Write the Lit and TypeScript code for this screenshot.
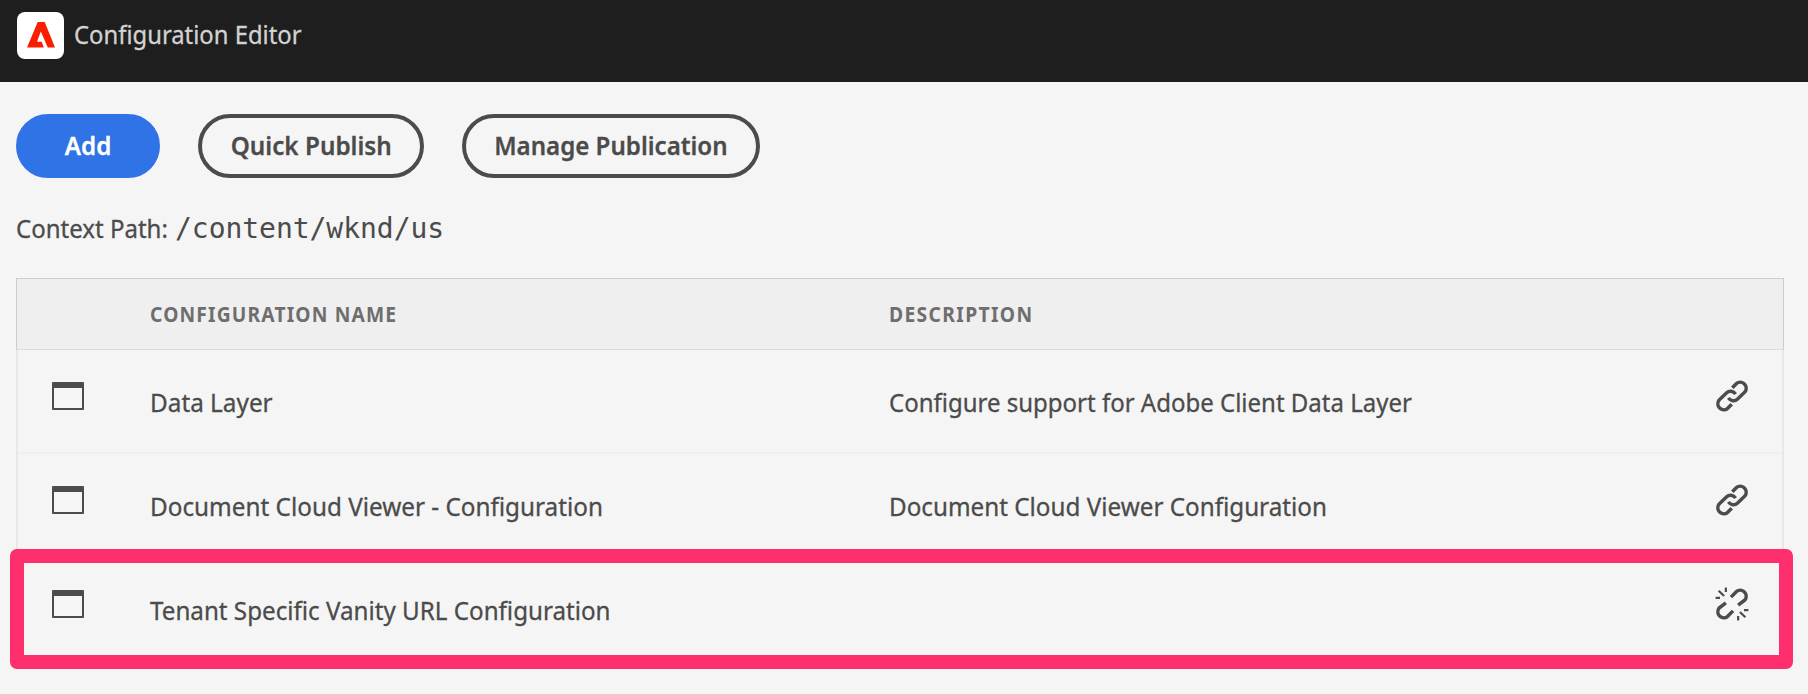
import { LitElement, html, css, svg } from "lit";
import { customElement, property } from "lit/decorators.js";

interface Config {
  name: string;
  nameScale: number;
  description: string;
  descriptionScale: number;
  linked: boolean;
  highlighted?: boolean;
}

const CONFIGS: Config[] = [
  { name: "Data Layer", nameScale: 0.935, description: "Configure support for Adobe Client Data Layer", descriptionScale: 0.923, linked: true },
  { name: "Document Cloud Viewer - Configuration", nameScale: 0.934, description: "Document Cloud Viewer Configuration", descriptionScale: 0.932, linked: true },
  { name: "Tenant Specific Vanity URL Configuration", nameScale: 0.93, description: "", descriptionScale: 1, linked: false, highlighted: true },
];

@customElement("link-icon")
class LinkIcon extends LitElement {
  @property({ type: Boolean }) linked = false;

  static styles = css`
    :host { display: block; width: 32px; height: 32px; }
    svg { display: block; overflow: visible; fill: none; stroke: #4b4b4b; }
    .chain { stroke-width: 3.4; }
    .tick { stroke-width: 2.1; }
  `;

  render() {
    return html`<svg width="32" height="32" viewBox="0.4 0.4 31.2 31.2">
      ${this.linked
        ? svg`<path class="chain" d="M16.3 8 20.4 3.8A5.85 5.85 0 0 1 28.6 12L21.2 19.2C18.6 21.6 14.6 21 12.5 17.8"/>
              <path class="chain" d="M15.7 24 11.6 28.2A5.85 5.85 0 0 1 3.4 20L10.8 12.8C13.4 10.4 17.4 11 19.5 14.2"/>`
        : svg`<path class="chain" d="M15 9.3 20.4 3.8A5.85 5.85 0 0 1 28.6 12L22 17"/>
              <path class="chain" d="M17 22.7 11.6 28.2A5.85 5.85 0 0 1 3.4 20L10 15"/>
              <path class="tick" d="M10 0V4.3M3 3 8.3 8.2M0 10H4.3M22 32V27.7M29 29 23.7 23.8M32 22H27.7"/>`}
    </svg>`;
  }
}

@customElement("app-root")
class AppRoot extends LitElement {
  static styles = css`
    :host {
      display: block;
      height: 694px;
      overflow: hidden;
      background: #f5f5f5;
      color: #4b4b4b;
      font: 400 26px/36px "Noto Sans", "Open Sans", sans-serif;
      box-sizing: border-box;
    }
    * { box-sizing: border-box; }
    header {
      display: flex;
      align-items: flex-start;
      height: 82px;
      padding: 12px 17px;
      gap: 10px;
      background: #1e1e1e;
      color: #d2d2d2;
    }
    .logo { display: block; }
    .title { padding-top: 4px; white-space: nowrap; }
    .fit {
      display: inline-block;
      white-space: nowrap;
      transform-origin: 0 50%;
      -webkit-text-stroke: 0.3px currentColor;
    }
    main { padding: 32px 23px 0 16px; }
    .actions { display: flex; gap: 38px; }
    button {
      display: flex;
      align-items: center;
      justify-content: center;
      height: 64px;
      padding: 0 0 2px;
      border: 4px solid #4b4b4b;
      border-radius: 32px;
      background: transparent;
      color: #4b4b4b;
      font: inherit;
      font-weight: 600;
      white-space: nowrap;
    }
    button .fit { transform-origin: 50% 50%; }
    .add { width: 144px; background: #2f73e6; border-color: #2f73e6; color: #fff; }
    .quick { width: 226px; }
    .manage { width: 298px; }
    .context { display: flex; height: 36px; margin-top: 32px; }
    .label { width: 159px; }
    code { padding-top: 1px; font: 28px/36px "DejaVu Sans Mono", monospace; letter-spacing: -0.04px; }
    .table { width: 1768px; margin-top: 32px; }
    .head, .row { display: grid; grid-template-columns: 133px 739px 1fr 68px; }
    .head {
      height: 72px;
      align-items: center;
      border: 1px solid #cdcdcd;
      border-bottom-color: #dcdcdc;
      background: #efefef;
      color: #6e6e6e;
      font-size: 20.5px;
      font-weight: 700;
      letter-spacing: 1.22px;
    }
    .head .fit { -webkit-text-stroke: 0; }
    .desc-head { letter-spacing: 1.45px; }
    .row {
      position: relative;
      height: 104px;
      padding-top: 34px;
      border: solid #e8e8e8;
      border-width: 0 2px;
      box-shadow: inset 0 -2px #efefef;
      grid-template-columns: 132px 739px 1fr 66px;
    }
    .window {
      width: 32px;
      height: 28px;
      margin: -2px 0 0 34px;
      border: 2px solid #4b4b4b;
      border-top-width: 6px;
      border-radius: 1px;
    }
    .link { margin-top: -4px; }
    .highlight {
      position: absolute;
      left: -8px;
      right: -11px;
      top: -9px;
      height: 120px;
      border: 14px solid #ff2e6c;
      border-radius: 7px;
    }
  `;

  /* Condenses a text run horizontally by the given factor. */
  private fit(text: string, scale: number) {
    return html`<span class="fit" style="transform:scaleX(${scale})">${text}</span>`;
  }

  private renderRow(c: Config) {
    return html`<div class="row">
      <div class="window"></div>
      <div>${this.fit(c.name, c.nameScale)}</div>
      <div>${c.description ? this.fit(c.description, c.descriptionScale) : ""}</div>
      <link-icon class="link" ?linked=${c.linked}></link-icon>
      ${c.highlighted ? html`<div class="highlight"></div>` : ""}
    </div>`;
  }

  render() {
    return html`
      <header>
        <svg class="logo" width="47" height="47" viewBox="0 0 47 47">
          <rect width="47" height="47" rx="8" fill="#fff"/>
          <path fill="#fa1e00" d="M20.7 10h7L38 35.5h-7.2L23.8 19.6 20 29.7h4.7l2.2 5.8H10z"/>
        </svg>
        <div class="title">${this.fit("Configuration Editor", 0.916)}</div>
      </header>
      <main>
        <div class="actions">
          <button class="add">${this.fit("Add", 0.93)}</button>
          <button class="quick">${this.fit("Quick Publish", 0.934)}</button>
          <button class="manage">${this.fit("Manage Publication", 0.927)}</button>
        </div>
        <div class="context"><div class="label">${this.fit("Context Path:", 0.924)}</div><code>/content/wknd/us</code></div>
        <div class="table">
          <div class="head">
            <span></span>
            <div>${this.fit("CONFIGURATION NAME", 0.94)}</div>
            <div class="desc-head">${this.fit("DESCRIPTION", 0.94)}</div>
          </div>
          ${CONFIGS.map((c) => this.renderRow(c))}
        </div>
      </main>`;
  }
}
